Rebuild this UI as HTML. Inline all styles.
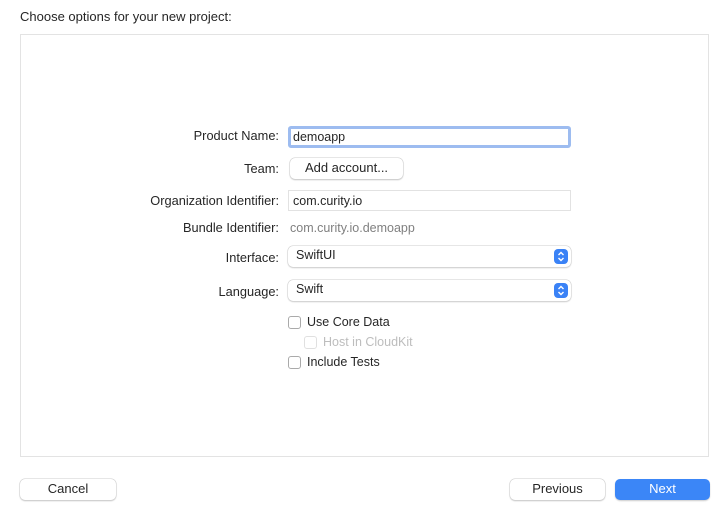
<!DOCTYPE html>
<html><head><style>
body{margin:0;width:728px;height:507px;background:#fff;font-family:"Liberation Sans",sans-serif;font-size:12.5px;color:#262626;position:relative;overflow:hidden}
.a{position:absolute}
.panel{left:20px;top:34px;width:689px;height:423px;border:1px solid #e3e3e3;box-sizing:border-box}
.lbl{right:449px;text-align:right;white-space:nowrap;font-size:12.8px;margin-top:-1px}
.field{left:288px;width:283px;height:21px;border:1px solid #e2e2e2;box-sizing:border-box;padding:3px 4px;background:#fff}
.btn{height:21px;border-radius:5px;background:#fff;box-shadow:0 0 0 0.5px #ccc,0 1px 1.5px rgba(0,0,0,.25);text-align:center;line-height:19px;font-size:13px}
.pop{left:288px;width:283px;height:21px;border-radius:5px;background:#fff;box-shadow:0 0 0 0.5px #ccc,0 1px 1.5px rgba(0,0,0,.2);box-sizing:border-box;padding:2px 8px}
.arr{position:absolute;right:3px;top:3px;width:14px;height:15px;border-radius:4px;background:#3a82f6}
.cb{width:13px;height:13px;border:1px solid #aaa;border-radius:3px;background:#fff;box-sizing:border-box}
</style></head><body>
<div class="a" style="left:20px;top:9px;font-size:13px">Choose options for your new project:</div>
<div class="a panel"></div>
<div class="a lbl" style="top:129px">Product Name:</div>
<div class="a field" style="top:126px;height:22px;border:3px solid #9dbcf0;border-radius:3px;padding:1px 2px">demoapp</div>
<div class="a lbl" style="top:162px">Team:</div>
<div class="a btn" style="left:290px;top:158px;width:113px">Add account...</div>
<div class="a lbl" style="top:194px">Organization Identifier:</div>
<div class="a field" style="top:190px">com.curity.io</div>
<div class="a lbl" style="top:221px">Bundle Identifier:</div>
<div class="a" style="left:290px;top:221px;color:#808080">com.curity.io.demoapp</div>
<div class="a lbl" style="top:251px">Interface:</div>
<div class="a pop" style="top:246px">SwiftUI<div class="arr"><svg width="14" height="15"><path d="M4.5 6 7 3.5 9.5 6M4.5 9 7 11.5 9.5 9" stroke="#fff" stroke-width="1.4" fill="none"/></svg></div></div>
<div class="a lbl" style="top:285px">Language:</div>
<div class="a pop" style="top:280px">Swift<div class="arr"><svg width="14" height="15"><path d="M4.5 6 7 3.5 9.5 6M4.5 9 7 11.5 9.5 9" stroke="#fff" stroke-width="1.4" fill="none"/></svg></div></div>
<div class="a cb" style="left:288px;top:316px"></div>
<div class="a" style="left:307px;top:315px">Use Core Data</div>
<div class="a cb" style="left:304px;top:336px;border-color:#e0e0e0"></div>
<div class="a" style="left:323px;top:335px;color:#bdbdbd">Host in CloudKit</div>
<div class="a cb" style="left:288px;top:356px"></div>
<div class="a" style="left:307px;top:355px">Include Tests</div>
<div class="a btn" style="left:20px;top:479px;width:96px">Cancel</div>
<div class="a btn" style="left:510px;top:479px;width:95px">Previous</div>
<div class="a btn" style="left:615px;top:479px;width:95px;background:#3b86f7;color:#fff;box-shadow:0 1px 1.5px rgba(0,0,0,.2)">Next</div>
</body></html>
